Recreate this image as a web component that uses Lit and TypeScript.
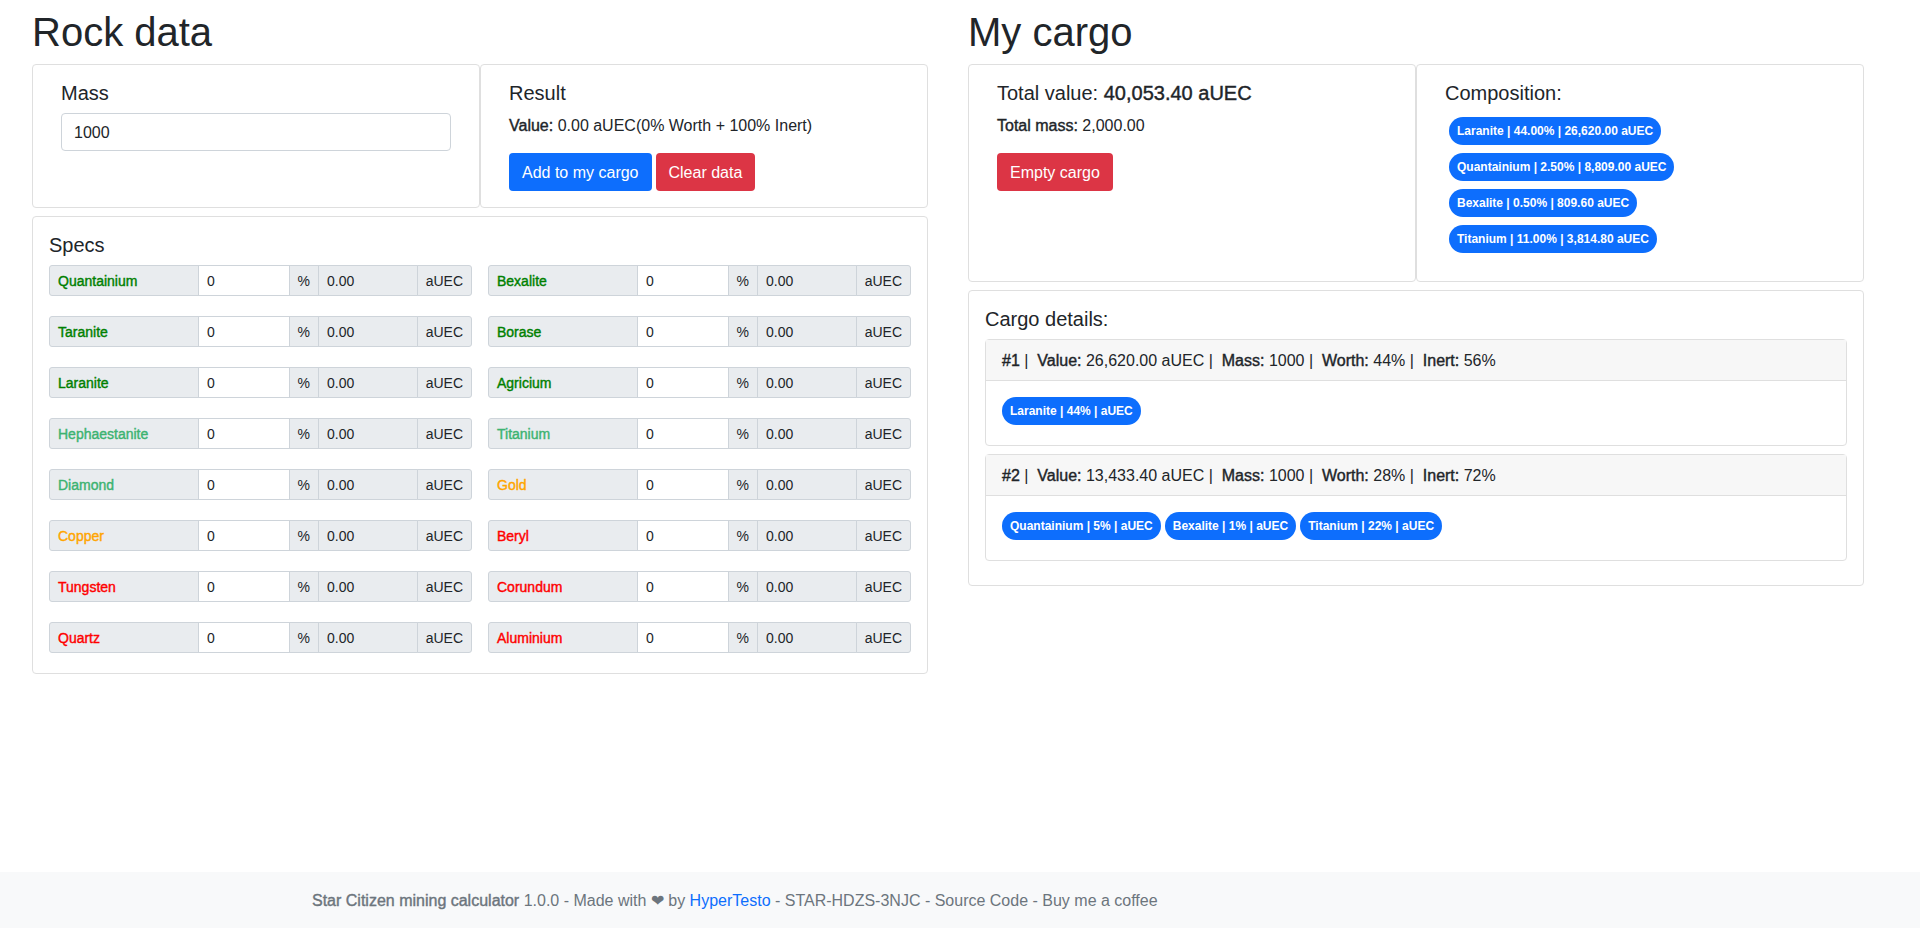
import { LitElement, html, css } from "lit";
import { customElement, property, state } from "lit/decorators.js";

type Grade = "top" | "good" | "fair" | "poor";

interface Mineral {
  name: string;
  grade: Grade;
}

interface CargoEntry {
  value: string;
  mass: number;
  worth: number;
  inert: number;
  parts: string[];
}

const MINERALS: Mineral[] = [
  { name: "Quantainium", grade: "top" },
  { name: "Bexalite", grade: "top" },
  { name: "Taranite", grade: "top" },
  { name: "Borase", grade: "top" },
  { name: "Laranite", grade: "top" },
  { name: "Agricium", grade: "top" },
  { name: "Hephaestanite", grade: "good" },
  { name: "Titanium", grade: "good" },
  { name: "Diamond", grade: "good" },
  { name: "Gold", grade: "fair" },
  { name: "Copper", grade: "fair" },
  { name: "Beryl", grade: "poor" },
  { name: "Tungsten", grade: "poor" },
  { name: "Corundum", grade: "poor" },
  { name: "Quartz", grade: "poor" },
  { name: "Aluminium", grade: "poor" },
];

const shared = css`
  *,
  *::before,
  *::after {
    box-sizing: border-box;
  }
  h1,
  h2,
  p {
    margin: 0;
    font-weight: 400;
  }
  h1 {
    font-size: 40px;
    line-height: 48px;
  }
  h2,
  .title {
    display: block;
    margin-bottom: 8px;
    font-size: 20px;
    line-height: 24px;
  }
  strong,
  .strong {
    font-weight: 400;
    -webkit-text-stroke: 0.4px currentColor;
  }
  input,
  button {
    font: inherit;
    color: inherit;
    margin: 0;
  }
  input[type="number"] {
    appearance: textfield;
  }
  input::-webkit-outer-spin-button,
  input::-webkit-inner-spin-button {
    appearance: none;
    margin: 0;
  }
`;

@customElement("mineral-field")
export class MineralField extends LitElement {
  @property() name = "";
  @property() grade: Grade = "top";

  static styles = [
    shared,
    css`
      :host {
        display: block;
        min-width: 0;
      }
      .group {
        display: flex;
        margin-bottom: 4px;
        font-size: 14px;
        line-height: 21px;
      }
      .group > * {
        border: 1px solid #ced4da;
        padding: 5px 8px 3px;
      }
      .group > * + * {
        margin-left: -1px;
      }
      .group > :first-child {
        border-radius: 3px 0 0 3px;
      }
      .group > :last-child {
        border-radius: 0 3px 3px 0;
      }
      .name {
        flex: none;
        width: 150px;
      }
      .name,
      .unit,
      .value {
        background: #e9ecef;
      }
      .share,
      .value {
        min-width: 0;
        width: 0;
        border-radius: 0;
      }
      .share {
        flex: 9 1 0;
        background: #fff;
      }
      .value {
        flex: 10 1 0;
      }
      .top {
        color: green;
      }
      .good {
        color: mediumseagreen;
      }
      .fair {
        color: orange;
      }
      .poor {
        color: red;
      }
    `,
  ];

  render() {
    return html`
      <div class="group">
        <label class="name strong ${this.grade}" for="share">${this.name}</label>
        <input class="share" id="share" type="number" value="0" />
        <span class="unit">%</span>
        <input class="value" type="text" value="0.00" readonly aria-label="${this.name} value" />
        <span class="unit">aUEC</span>
      </div>
    `;
  }
}

@customElement("app-root")
export class AppRoot extends LitElement {
  @state() private composition = [
    "Laranite | 44.00% | 26,620.00 aUEC",
    "Quantainium | 2.50% | 8,809.00 aUEC",
    "Bexalite | 0.50% | 809.60 aUEC",
    "Titanium | 11.00% | 3,814.80 aUEC",
  ];

  @state() private cargo: CargoEntry[] = [
    { value: "26,620.00", mass: 1000, worth: 44, inert: 56, parts: ["Laranite | 44% | aUEC"] },
    {
      value: "13,433.40",
      mass: 1000,
      worth: 28,
      inert: 72,
      parts: ["Quantainium | 5% | aUEC", "Bexalite | 1% | aUEC", "Titanium | 22% | aUEC"],
    },
  ];

  static styles = [
    shared,
    css`
      :host {
        display: flex;
        flex-direction: column;
        min-height: 100vh;
        background: #fff;
        color: #212529;
        font-family: "Liberation Sans", Arial, sans-serif;
        font-size: 16px;
        line-height: 24px;
      }
      main {
        flex: 1;
        display: grid;
        grid-template-columns: 1fr 1fr;
        align-items: start;
        gap: 40px;
        padding: 8px 56px 24px 32px;
      }
      .column {
        display: flex;
        flex-direction: column;
        gap: 8px;
      }
      .pair {
        display: grid;
        grid-template-columns: 1fr 1fr;
      }
      .card {
        border: 1px solid #dfdfdf;
        border-radius: 4px;
        padding: 16px;
      }
      .pair .card {
        padding: 16px 28px;
      }
      .mass {
        display: block;
        width: 100%;
        padding: 7px 12px 5px;
        border: 1px solid #ced4da;
        border-radius: 4px;
        background: #fff;
      }
      .line {
        margin-bottom: 14px;
        line-height: 26px;
      }
      .actions {
        display: flex;
        gap: 4px;
      }
      .btn {
        padding: 8px 13px 6px;
        border: 0;
        border-radius: 4px;
        color: #fff;
        background: #0d6efd;
      }
      .danger {
        background: #dc3545;
      }
      .specs {
        display: grid;
        grid-template-columns: 1fr 1fr;
        gap: 16px;
      }
      .badge {
        padding: 8px;
        border-radius: 14px;
        background: #0d6efd;
        color: #fff;
        font-size: 12px;
        line-height: 12px;
        font-weight: 700;
        white-space: nowrap;
      }
      .stack {
        display: flex;
        flex-direction: column;
        align-items: flex-start;
        gap: 8px;
        padding: 4px 4px 12px;
      }
      .entry {
        margin-bottom: 8px;
        border: 1px solid #dfdfdf;
        border-radius: 4px;
      }
      .head {
        padding: 9px 16px 7px;
        border-bottom: 1px solid #dfdfdf;
        background: #f7f7f7;
      }
      .parts {
        display: flex;
        flex-wrap: wrap;
        gap: 4px;
        padding: 16px 16px 20px;
      }
      footer {
        padding: 17px 24px 15px;
        background: #f8f9fa;
        color: #6c757d;
      }
      .inner {
        max-width: 1296px;
        margin: 0 auto;
      }
      a {
        color: inherit;
        text-decoration: none;
      }
      .author {
        color: #0d6efd;
      }
    `,
  ];

  private entry(item: CargoEntry, index: number) {
    return html`
      <article class="entry">
        <div class="head">
          <strong>#${index + 1}</strong> |&nbsp; <strong>Value:</strong> ${item.value} aUEC |&nbsp;
          <strong>Mass:</strong> ${item.mass} |&nbsp; <strong>Worth:</strong> ${item.worth}% |&nbsp;
          <strong>Inert:</strong> ${item.inert}%
        </div>
        <div class="parts">${item.parts.map((part) => html`<span class="badge">${part}</span>`)}</div>
      </article>
    `;
  }

  render() {
    return html`
      <main>
        <section class="column">
          <h1>Rock data</h1>
          <div class="pair">
            <div class="card">
              <label class="title" for="mass">Mass</label>
              <input class="mass" id="mass" type="number" value="1000" />
            </div>
            <div class="card">
              <h2>Result</h2>
              <p class="line"><strong>Value:</strong> 0.00 aUEC(0% Worth + 100% Inert)</p>
              <div class="actions">
                <button class="btn" type="button">Add to my cargo</button>
                <button class="btn danger" type="button">Clear data</button>
              </div>
            </div>
          </div>
          <div class="card">
            <h2>Specs</h2>
            <div class="specs">
              ${MINERALS.map((m) => html`<mineral-field .name=${m.name} .grade=${m.grade}></mineral-field>`)}
            </div>
          </div>
        </section>
        <section class="column">
          <h1>My cargo</h1>
          <div class="pair">
            <div class="card">
              <h2>Total value: <strong>40,053.40 aUEC</strong></h2>
              <p class="line"><strong>Total mass:</strong> 2,000.00</p>
              <div class="actions">
                <button class="btn danger" type="button">Empty cargo</button>
              </div>
            </div>
            <div class="card">
              <h2>Composition:</h2>
              <div class="stack">
                ${this.composition.map((part) => html`<span class="badge">${part}</span>`)}
              </div>
            </div>
          </div>
          <div class="card">
            <h2>Cargo details:</h2>
            ${this.cargo.map((item, i) => this.entry(item, i))}
          </div>
        </section>
      </main>
      <footer>
        <div class="inner">
          <strong>Star Citizen mining calculator</strong> 1.0.0 - Made with ❤ by
          <a class="author" href="#">HyperTesto</a> - <a href="#">STAR-HDZS-3NJC</a> -
          <a href="#">Source Code</a> - <a href="#">Buy me a coffee</a>
        </div>
      </footer>
    `;
  }
}
